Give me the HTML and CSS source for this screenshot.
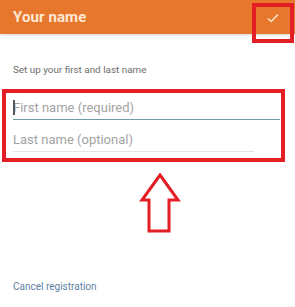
FILE: index.html
```html
<!DOCTYPE html>
<html>
<head>
<meta charset="utf-8">
<link rel="stylesheet" href="styles.css">
</head>
<body>
<div class="screen">
  <header class="bar">
    <span class="title">Your name</span>
    <span class="check">
      <svg width="12" height="10" viewBox="0 0 12 10"><path d="M1 5.5 L4.2 8.5 L11 1.5" fill="none" stroke="#fbe3c8" stroke-width="1.6"/></svg>
    </span>
  </header>
  <main class="content">
    <p class="hint">Set up your first and last name</p>
    <div class="field first"><span class="caret"></span><span class="ph">First name (required)</span></div>
    <div class="field last"><span class="ph">Last name (optional)</span></div>
    <a class="cancel">Cancel registration</a>
  </main>
  <div class="mark mark-check"></div>
  <div class="mark mark-fields"></div>
  <svg class="arrow" width="44" height="62" viewBox="0 0 44 62">
    <path d="M22 2 L40 27 L31 27 L31 58 L11 58 L11 27 L4 27 Z" fill="none" stroke="#e31e24" stroke-width="3" stroke-linejoin="miter"/>
  </svg>
</div>
</body>
</html>
```
FILE: styles.css
```css
* { box-sizing: border-box; }
html, body { margin: 0; padding: 0; background: #fff; }
.screen {
  position: relative;
  width: 295px;
  height: 307px;
  overflow: hidden;
  font-family: Roboto, "Liberation Sans", sans-serif;
}
.bar {
  height: 34px;
  background: #e8772e;
  display: flex;
  align-items: center;
  justify-content: space-between;
  padding: 0 14px 0 13px;
  box-shadow: 0 1px 3px rgba(0,0,0,0.18);
}
.title {
  color: #fde8d2;
  font-size: 15px;
  font-weight: 700;
  letter-spacing: 0.1px;
  margin-top: -1px;
}
.check { display: flex; margin-top: 1px; margin-right: 2px; }
.content {
  padding: 0 13px;
  display: flex;
  flex-direction: column;
}
.hint {
  margin: 30px 0 0;
  font-size: 9.9px;
  color: #6d6d6d;
  height: 12px;
  line-height: 12px;
}
.field {
  display: flex;
  align-items: center;
  height: 25px;
  font-size: 13px;
  color: #a3a3a3;
  position: relative;
}
.field.first {
  margin-top: 19px;
  border-bottom: 1.5px solid #6f9aa6;
  width: 267px;
}
.field.last {
  margin-top: 7px;
  border-bottom: 1px solid #e4e4e4;
  width: 241px;
}
.caret {
  width: 1.5px;
  height: 15px;
  background: #555;
  position: absolute;
  left: 0;
}
.cancel {
  margin-top: 129px;
  font-size: 10px;
  color: #5d7fa5;
}
.mark {
  position: absolute;
  border: 4px solid #e31e24;
}
.mark-check { left: 252px; top: 3px; width: 42px; height: 40px; }
.mark-fields { left: 2px; top: 89px; width: 283px; height: 73px; }
.arrow { position: absolute; left: 138px; top: 173px; }
```
